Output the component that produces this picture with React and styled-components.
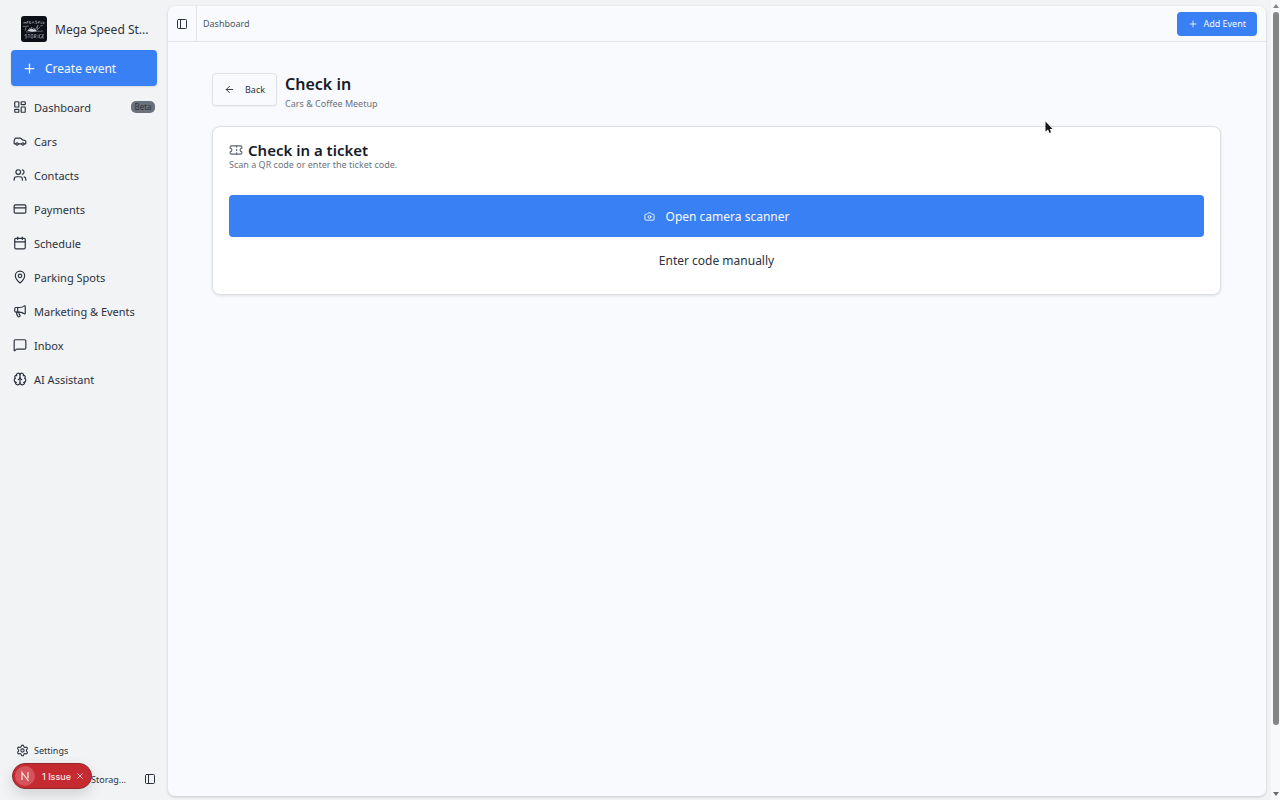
import styled, { createGlobalStyle } from "styled-components";
import {
  ArrowLeft,
  Brain,
  Calendar,
  Camera,
  Car,
  CreditCard,
  LayoutDashboard,
  MapPin,
  Megaphone,
  MessageSquare,
  PanelLeft,
  Plus,
  Settings,
  Ticket,
  Users,
  X,
} from "lucide-react";

const GlobalStyle = createGlobalStyle`
  * {
    box-sizing: border-box;
  }

  body {
    margin: 0;
    background-color: #f2f3f5;
    color: #2b323d;
    font-family: "Noto Sans", sans-serif;
    font-size: 11px;
  }

  button {
    font-family: inherit;
    cursor: pointer;
  }

  h1, h2, p, ul {
    margin: 0;
    padding: 0;
  }
`;

const Layout = styled.div`
  display: flex;
  min-height: 100vh;
`;

const Sidebar = styled.aside`
  width: 168px;
  flex-shrink: 0;
  display: flex;
  flex-direction: column;
  padding: 16px 11px 6px;
`;

const Brand = styled.div`
  display: flex;
  align-items: center;
  gap: 8px;
  height: 26px;
  padding-left: 10px;
  margin-bottom: 8px;
`;

const BrandLogo = styled.svg`
  width: 26px;
  height: 26px;
  flex-shrink: 0;
`;

const BrandName = styled.span`
  font-size: 12px;
  white-space: nowrap;
`;

const CreateButton = styled.button`
  display: flex;
  align-items: center;
  gap: 8px;
  height: 36px;
  flex-shrink: 0;
  padding: 0 11px;
  border: none;
  border-radius: 4px;
  background-color: #3a80f5;
  color: #f8fafc;
  font-size: 12px;
  box-shadow: 0 1px 2px rgba(0, 0, 0, 0.12);
`;

const NavList = styled.ul`
  list-style: none;
  padding-top: 4px;
`;

const NavLink = styled.a`
  display: flex;
  align-items: center;
  gap: 7px;
  height: 34px;
  padding: 0 2px;
  color: inherit;
  font-size: 11px;
  text-decoration: none;
`;

const Badge = styled.span`
  margin-left: auto;
  width: 24px;
  border-radius: 5px;
  background-color: #6b717b;
  color: #30353f;
  font-size: 8px;
  line-height: 12px;
  text-align: center;
`;

const SidebarFooter = styled.div`
  position: relative;
  margin-top: auto;
`;

const SettingsLink = styled.a`
  display: flex;
  align-items: center;
  gap: 5px;
  height: 28px;
  padding: 0 5px;
  color: inherit;
  font-size: 9px;
  text-decoration: none;
`;

const Account = styled.div`
  display: flex;
  align-items: center;
  justify-content: space-between;
  height: 30px;
  padding: 0 1px 0 80px;
  font-size: 9px;
`;

const IconButton = styled.button`
  display: flex;
  align-items: center;
  justify-content: center;
  padding: 0;
  border: none;
  background: none;
  color: inherit;
`;

const IssueBadge = styled.div`
  position: absolute;
  left: 1px;
  bottom: 5px;
  display: flex;
  align-items: center;
  width: 80px;
  height: 26px;
  padding: 0 6px 0 2px;
  border: 1px solid #8d2a31;
  border-radius: 13px;
  background-color: #c62a31;
  color: #fbe3e4;
  font-family: Inter, sans-serif;
  font-size: 9px;
  font-weight: 500;
  box-shadow: 0 5px 14px rgba(0, 0, 0, 0.14);
`;

const IssueLogo = styled.svg`
  width: 20px;
  height: 20px;
  margin-right: 7px;
`;

const IssueClose = styled(IconButton)`
  margin-left: auto;
`;

const Panel = styled.div`
  flex: 1;
  min-width: 0;
  display: flex;
  flex-direction: column;
  margin: 6px 0 4px;
  border-radius: 7px;
  background-color: #f8fafd;
  box-shadow: 0 1px 3px rgba(0, 0, 0, 0.18);
`;

const TopBar = styled.header`
  display: flex;
  align-items: center;
  height: 36px;
  padding-right: 9px;
  border-bottom: 1px solid #e2e4e9;
`;

const SidebarToggle = styled(IconButton)`
  width: 29px;
  height: 100%;
  border-right: 1px solid #e2e4e9;
`;

const Crumb = styled.span`
  margin-left: 6px;
  color: #4f5661;
  font-size: 9px;
`;

const AddButton = styled.button`
  display: flex;
  align-items: center;
  gap: 5px;
  height: 24px;
  margin-left: auto;
  padding: 0 11px;
  border: none;
  border-radius: 4px;
  background-color: #3a80f5;
  color: #f8fafc;
  font-size: 9px;
`;

const Content = styled.main`
  padding: 31px 45px 31px 44px;
`;

const PageHeader = styled.div`
  display: flex;
  align-items: flex-start;
  gap: 8px;
  margin-bottom: 13px;
`;

const BackButton = styled.button`
  display: flex;
  align-items: center;
  gap: 10px;
  height: 33px;
  padding: 0 11px;
  border: 1px solid #dfe2e7;
  border-radius: 4px;
  background-color: #f9fafd;
  color: #2b323d;
  font-size: 9px;
  box-shadow: 0 1px 2px rgba(0, 0, 0, 0.06);
`;

const PageTitle = styled.h1`
  color: #151b28;
  font-size: 16px;
  font-weight: 600;
  line-height: 22px;
`;

const PageSubtitle = styled.p`
  color: #6d737e;
  font-size: 9px;
  line-height: 18px;
`;

const Card = styled.section`
  padding: 15px 16px 13px;
  border: 1px solid #dcdfe4;
  border-radius: 8px;
  background-color: #ffffff;
  box-shadow: 0 1px 3px rgba(0, 0, 0, 0.1);
`;

const CardTitle = styled.h2`
  display: flex;
  align-items: center;
  gap: 5px;
  color: #151b28;
  font-size: 15px;
  font-weight: 600;
  line-height: 16px;

  svg {
    color: #5f6571;
  }
`;

const CardText = styled.p`
  margin-bottom: 24px;
  color: #6d737e;
  font-size: 9px;
  line-height: 13px;
`;

const ScanButton = styled.button`
  display: flex;
  align-items: center;
  justify-content: center;
  gap: 11px;
  width: 100%;
  height: 42px;
  border: none;
  border-radius: 4px;
  background-color: #3a80f5;
  color: #f8fafc;
  font-size: 12px;
`;

const ManualButton = styled.button`
  width: 100%;
  height: 42px;
  margin-top: 2px;
  border: none;
  background: none;
  color: #2b323d;
  font-size: 12px;
`;

const ScrollTrack = styled.div`
  display: flex;
  flex-direction: column;
  align-items: center;
  justify-content: space-between;
  width: 9px;
  margin-left: 5px;
  padding: 4px 0;
  background-color: #f8f9fb;
`;

const ScrollArrow = styled.svg`
  width: 6px;
  height: 4px;
`;

const ScrollThumb = styled.div`
  flex: 0 1 90%;
  width: 6px;
  margin: 4px 0 auto;
  border-radius: 3px;
  background-color: #858585;
`;

const Cursor = styled.svg`
  position: absolute;
  left: 1045px;
  top: 121px;
  width: 8px;
  height: 13px;
  pointer-events: none;
`;

const navItems = [
  { label: "Dashboard", icon: LayoutDashboard, badge: "Beta" },
  { label: "Cars", icon: Car },
  { label: "Contacts", icon: Users },
  { label: "Payments", icon: CreditCard },
  { label: "Schedule", icon: Calendar },
  { label: "Parking Spots", icon: MapPin },
  { label: "Marketing & Events", icon: Megaphone },
  { label: "Inbox", icon: MessageSquare },
  { label: "AI Assistant", icon: Brain },
];

function Logo() {
  return (
    <BrandLogo viewBox="0 0 26 26" aria-hidden="true">
      <rect width="26" height="26" rx="3" fill="#0d0f17" />
      <g fill="none" stroke="#8e9198" strokeWidth="0.7">
        <path d="M3 8V6l1 1 1-1v2M6 7.500V5.500h1.500M6 6.500h1.500M10 5.500H8.500v2H10v-1M11 7.500l1-2 1 2M16 5H14.500v1H16v1.500h-1.500M17.500 7.500V5.500h1v1h-1M20 5.500v2h1M22 8V6l1.500 1L22 8" />
        <path d="M2 10.500l6-.5M5 10.500L4 15M7 14l2-2v2l2-3-1 4 3-3 1 2 3-5-1 5 3-3M19 10l3-.5M5 16l17-1" />
        <path d="M6 18.500H4v1.500h2v2H4M7 18.500h2M8 18.500V22M10 18.500h2V22h-2zM13.500 22v-3.500h1.500v2h-1.500l2 1.500M17 22v-3.500M20.500 18.500H18.500V22h2v-1.500M23 18.500h-1.500V22H23M21.500 20H23" />
      </g>
      <path d="M6 14.500l4-1.500 4 .5 2 1.500-5 .8z" fill="#d5d7da" />
    </BrandLogo>
  );
}

function NavItem({ label, icon: Icon, badge }) {
  return (
    <li>
      <NavLink href="#">
        <Icon size={14} />
        {label}
        {badge && <Badge>{badge}</Badge>}
      </NavLink>
    </li>
  );
}

function Issues() {
  return (
    <IssueBadge>
      <IssueLogo viewBox="0 0 20 20" aria-hidden="true">
        <circle cx="10" cy="10" r="10" fill="#d5535a" />
        <path
          d="M7 14V6.500L13.500 15M13 6v6.500"
          fill="none"
          stroke="#fbe3e4"
          strokeWidth="1.200"
        />
      </IssueLogo>
      1 Issue
      <IssueClose aria-label="Dismiss">
        <X size={10} />
      </IssueClose>
    </IssueBadge>
  );
}

function App() {
  return (
    <Layout>
      <GlobalStyle />
      <Sidebar>
        <Brand>
          <Logo />
          <BrandName>Mega Speed St...</BrandName>
        </Brand>
        <CreateButton>
          <Plus size={15} />
          Create event
        </CreateButton>
        <nav>
          <NavList>
            {navItems.map((item) => (
              <NavItem key={item.label} {...item} />
            ))}
          </NavList>
        </nav>
        <SidebarFooter>
          <SettingsLink href="#">
            <Settings size={13} />
            Settings
          </SettingsLink>
          <Account>
            <span>Storag...</span>
            <IconButton aria-label="Collapse sidebar">
              <PanelLeft size={12} />
            </IconButton>
          </Account>
          <Issues />
        </SidebarFooter>
      </Sidebar>
      <Panel>
        <TopBar>
          <SidebarToggle aria-label="Toggle sidebar">
            <PanelLeft size={12} />
          </SidebarToggle>
          <Crumb>Dashboard</Crumb>
          <AddButton>
            <Plus size={10} />
            Add Event
          </AddButton>
        </TopBar>
        <Content>
          <PageHeader>
            <BackButton>
              <ArrowLeft size={11} />
              Back
            </BackButton>
            <div>
              <PageTitle>Check in</PageTitle>
              <PageSubtitle>Cars &amp; Coffee Meetup</PageSubtitle>
            </div>
          </PageHeader>
          <Card>
            <CardTitle>
              <Ticket size={14} />
              Check in a ticket
            </CardTitle>
            <CardText>Scan a QR code or enter the ticket code.</CardText>
            <ScanButton>
              <Camera size={11} />
              Open camera scanner
            </ScanButton>
            <ManualButton>Enter code manually</ManualButton>
          </Card>
        </Content>
      </Panel>
      <ScrollTrack>
        <ScrollArrow viewBox="0 0 6 4">
          <path d="M0 4L3 0L6 4Z" fill="#858585" />
        </ScrollArrow>
        <ScrollThumb />
        <ScrollArrow viewBox="0 0 6 4">
          <path d="M0 0L3 4L6 0Z" fill="#6b6b6b" />
        </ScrollArrow>
      </ScrollTrack>
      <Cursor viewBox="0 0 8 13">
        <path
          d="M0.500 0.500V10.500L3 8.500L4.500 12L6 11.300L4.700 8H7.500Z"
          fill="#14161c"
        />
      </Cursor>
    </Layout>
  );
}

export default App;
